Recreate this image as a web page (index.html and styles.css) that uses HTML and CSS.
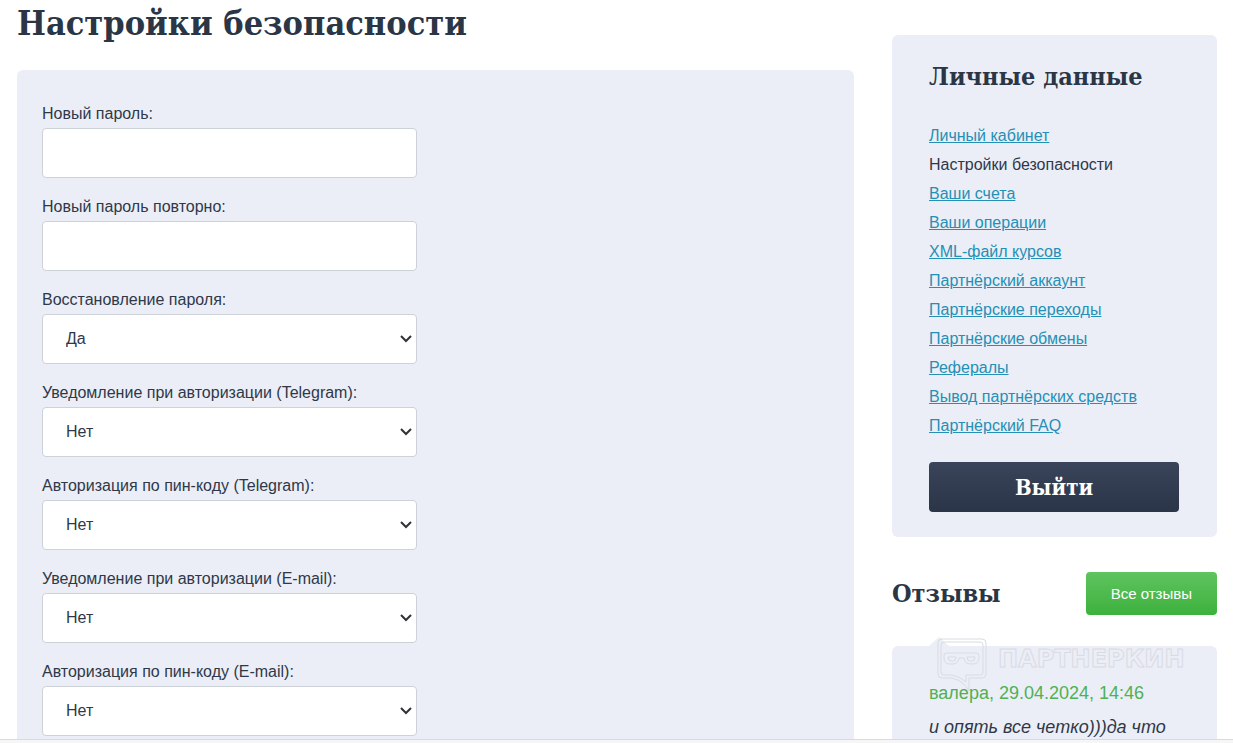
FILE: index.html
```html
<!DOCTYPE html>
<html lang="ru">
<head>
    <meta charset="UTF-8">
    <meta name="viewport" content="width=device-width, initial-scale=1.0">
    <title>Настройки безопасности</title>
    <link rel="stylesheet" href="styles.css">
</head>
<body>

    <div class="page">
        <main class="content">
            <h1>Настройки безопасности</h1>

            <form class="card settings">
                <label for="pass">Новый пароль:</label>
                <input type="password" id="pass">

                <label for="pass2">Новый пароль повторно:</label>
                <input type="password" id="pass2">

                <label for="recovery">Восстановление пароля:</label>
                <select id="recovery">
                    <option selected>Да</option>
                    <option>Нет</option>
                </select>

                <label for="notifyTelegram">Уведомление при авторизации (Telegram):</label>
                <select id="notifyTelegram">
                    <option selected>Нет</option>
                    <option>Да</option>
                </select>

                <label for="pinTelegram">Авторизация по пин-коду (Telegram):</label>
                <select id="pinTelegram">
                    <option selected>Нет</option>
                    <option>Да</option>
                </select>

                <label for="notifyEmail">Уведомление при авторизации (E-mail):</label>
                <select id="notifyEmail">
                    <option selected>Нет</option>
                    <option>Да</option>
                </select>

                <label for="pinEmail">Авторизация по пин-коду (E-mail):</label>
                <select id="pinEmail">
                    <option selected>Нет</option>
                    <option>Да</option>
                </select>
            </form>
        </main>

        <aside class="sidebar">
            <section class="card account">
                <h2>Личные данные</h2>
                <ul class="menu">
                    <li><a href="#">Личный кабинет</a></li>
                    <li>Настройки безопасности</li>
                    <li><a href="#">Ваши счета</a></li>
                    <li><a href="#">Ваши операции</a></li>
                    <li><a href="#">XML-файл курсов</a></li>
                    <li><a href="#">Партнёрский аккаунт</a></li>
                    <li><a href="#">Партнёрские переходы</a></li>
                    <li><a href="#">Партнёрские обмены</a></li>
                    <li><a href="#">Рефералы</a></li>
                    <li><a href="#">Вывод партнёрских средств</a></li>
                    <li><a href="#">Партнёрский FAQ</a></li>
                </ul>
                <button type="button" class="logout">Выйти</button>
            </section>

            <div class="reviews-head">
                <h2>Отзывы</h2>
                <a href="#" class="all-reviews">Все отзывы</a>
            </div>

            <article class="card review">
                <div class="watermark">
                    <svg width="50" height="54" viewBox="0 0 50 54" fill="none" stroke="#d9dbe2">
                        <path d="M4 1H45Q49 1 49 5V36Q49 40 45 40H32V53Q26 43 18 41L14 40H5Q1 40 1 36V5Q1 1 5 1Z"/>
                        <path d="M7 4H43Q46 4 46 7V34Q46 37 43 37H29V44Q24 39 15 37H7Q4 37 4 34V7Q4 4 7 4Z"/>
                        <path d="M9 15H39Q42 15 42 18V20Q42 26 36 26H33Q28 26 27 20H22Q21 26 16 26H13Q7 26 7 20V18Q7 15 9 15Z"/>
                        <path d="M11 19H19Q19 23 16 23H14Q11 23 11 19ZM30 19H38Q38 23 35 23H33Q30 23 30 19Z"/>
                    </svg>
                    <span>ПАРТНЕРКИН</span>
                </div>
                <div class="review-meta">валера, 29.04.2024, 14:46</div>
                <p class="review-text">и опять все четко)))да что</p>
            </article>
        </aside>
    </div>

    <footer class="bottom-bar"></footer>

</body>
</html>
```

FILE: styles.css
```css
* {
    box-sizing: border-box;
}
body {
    display: flex;
    flex-direction: column;
    height: 100vh;
    margin: 0;
    overflow: hidden;
    background: #fff;
    color: #2f3848;
    font: 16px/28px "Liberation Sans", Arial, sans-serif;
}
h1, h2, .logout {
    font-family: "Roboto Slab", "DejaVu Serif Condensed", "DejaVu Serif", serif;
    font-weight: bold;
}
h1, h2 {
    margin: 0;
    color: #2a3646;
}
h1 {
    font-size: 34px;
    line-height: 46px;
    white-space: nowrap;
}
h2 {
    font-size: 25px;
    line-height: 34px;
    white-space: nowrap;
}
.page {
    display: flex;
    flex: 1;
    gap: 38px;
    min-height: 0;
    padding: 0 16px 0 17px;
    overflow: hidden;
}
.content {
    flex: 1;
}
.card {
    border-radius: 6px;
    background: #ebeef7;
}
.settings {
    margin-top: 24px;
    padding: 30px 25px;
}
.settings label {
    display: block;
}
.settings input, .settings select {
    display: block;
    width: 100%;
    max-width: 375px;
    height: 50px;
    margin-bottom: 15px;
    padding: 0 23px;
    border: 1px solid #cdd1d8;
    border-radius: 4px;
    background: #fff;
    color: #2f3848;
    font: inherit;
}
.settings select {
    appearance: none;
    background: #fff url("data:image/svg+xml,%3Csvg xmlns='http://www.w3.org/2000/svg' width='12' height='8' fill='none' stroke='%232f3338' stroke-width='2'%3E%3Cpath d='M1 1l5 5 5-5'/%3E%3C/svg%3E") no-repeat right 4px center;
}
.sidebar {
    width: 325px;
    padding-top: 35px;
}
.account {
    padding: 25px 38px 25px 37px;
}
.menu {
    margin: 27px 0 22px;
    padding: 0;
    list-style: none;
    line-height: 29px;
}
.menu a {
    color: #2490b5;
}
.logout {
    display: block;
    width: 100%;
    height: 50px;
    border: none;
    border-radius: 4px;
    background: linear-gradient(#3a445a, #2b3548);
    color: #fff;
    font-size: 22px;
    cursor: pointer;
}
.reviews-head {
    display: flex;
    align-items: center;
    justify-content: space-between;
    margin: 35px 0 31px;
}
.all-reviews {
    padding: 0 25px;
    border-radius: 4px;
    background: linear-gradient(#5fc45f, #3db13d);
    color: #fff;
    font-size: 15px;
    line-height: 43px;
    text-decoration: none;
}
.review {
    position: relative;
    padding: 30px 25px 30px 37px;
    font-size: 18px;
    line-height: 34px;
}
.review::before {
    content: "";
    position: absolute;
    top: -9px;
    left: 37px;
    border: solid transparent;
    border-width: 0 10px 9px;
    border-bottom-color: #ebeef7;
}
.review-meta {
    position: relative;
    color: #4fb152;
}
.review-text {
    margin: 0;
    font-style: italic;
}
.watermark {
    position: absolute;
    top: -8px;
    left: 45px;
    display: flex;
    gap: 11px;
    pointer-events: none;
}
.watermark span {
    color: #ebeef7;
    font: bold 24px/42px "DejaVu Sans", sans-serif;
    -webkit-text-stroke: 1px #d9dbe2;
}
.bottom-bar {
    height: 4px;
    border-top: 1px solid #d9dadc;
    background: #f6f6f6;
}
```
